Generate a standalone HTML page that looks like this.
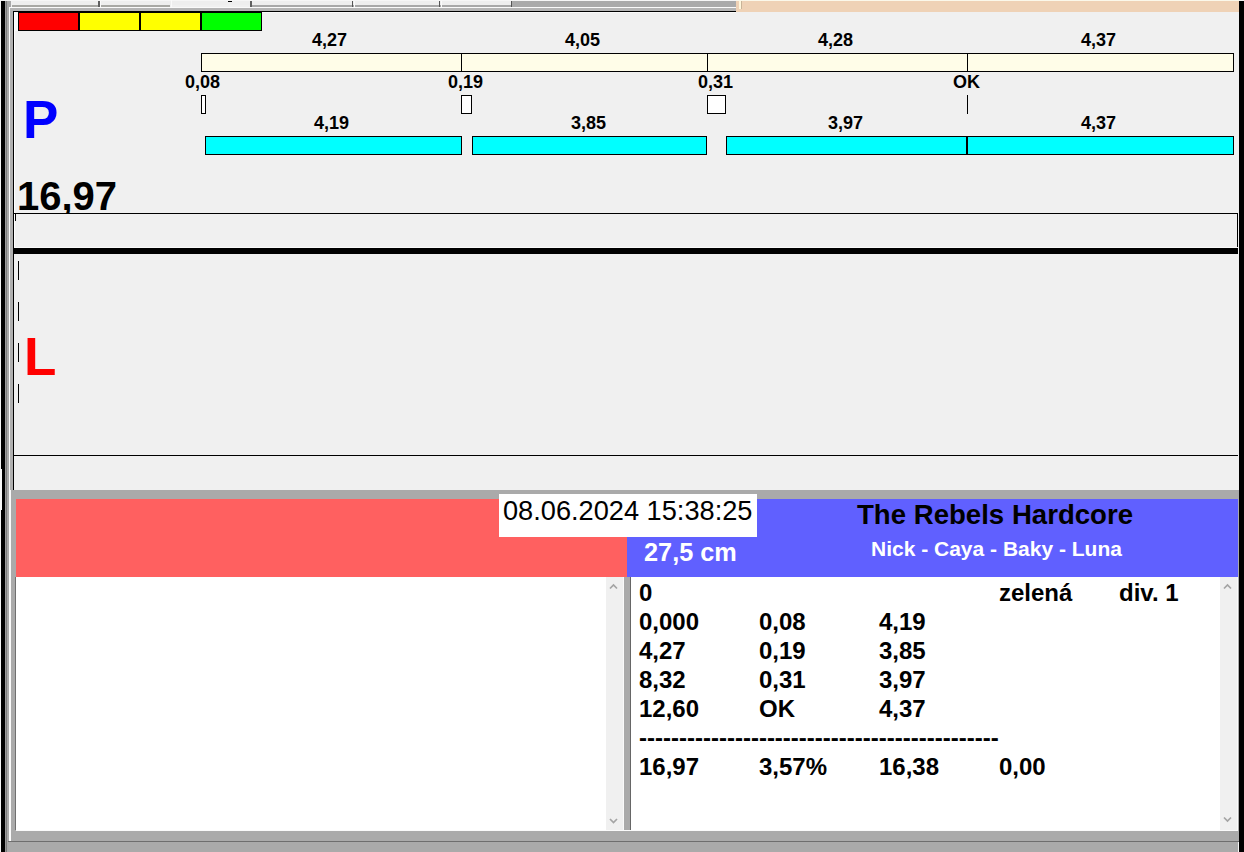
<!DOCTYPE html>
<html><head><meta charset="utf-8">
<style>
*{margin:0;padding:0;box-sizing:border-box}
html,body{width:1244px;height:852px;overflow:hidden;background:#f0f0f0;font-family:"Liberation Sans",sans-serif}
.a{position:absolute}
.t{position:absolute;white-space:pre;font-weight:bold;line-height:1;color:#000}
.bx{position:absolute;border:1px solid #000}
</style></head><body>
<!-- outer left frame -->
<div class="a" style="left:0;top:0;width:1px;height:852px;background:#f4f4f4"></div>
<div class="a" style="left:1px;top:1px;width:4px;height:851px;background:#000"></div>
<div class="a" style="left:5px;top:1px;width:1px;height:851px;background:#9a9a9a"></div>
<div class="a" style="left:6px;top:1px;width:1px;height:851px;background:#7c7c7c"></div>
<div class="a" style="left:7px;top:1px;width:2px;height:851px;background:#a8a8a8"></div>
<div class="a" style="left:9px;top:1px;width:2px;height:6px;background:#a8a8a8"></div>
<div class="a" style="left:9px;top:7px;width:1px;height:834px;background:#fafafa"></div>
<div class="a" style="left:10px;top:8px;width:3px;height:482px;background:#b0b0b0"></div>
<div class="a" style="left:9px;top:841px;width:2px;height:11px;background:#aaaaaa"></div>
<!-- top tab strip -->
<div class="a" style="left:10px;top:0;width:726px;height:1px;background:#f6f6f6"></div>
<div class="a" style="left:12px;top:1px;width:724px;height:4px;background:#eeeeee"></div>
<div class="a" style="left:12px;top:5px;width:158px;height:2px;background:#a8a8a4"></div>
<div class="a" style="left:252px;top:5px;width:260px;height:2px;background:#a8a8a8"></div>
<div class="a" style="left:512px;top:1px;width:224px;height:6px;background:#aaaaaa"></div>
<div class="a" style="left:98px;top:1px;width:2px;height:6px;background:#606060"></div>
<div class="a" style="left:100px;top:1px;width:1px;height:6px;background:#fafafa"></div>
<div class="a" style="left:171px;top:0px;width:1px;height:7px;background:#fafafa"></div>
<div class="a" style="left:228px;top:1px;width:4px;height:1px;background:#000"></div>
<div class="a" style="left:250px;top:1px;width:2px;height:6px;background:#606060"></div>
<div class="a" style="left:352px;top:1px;width:1px;height:6px;background:#555"></div>
<div class="a" style="left:354px;top:1px;width:1px;height:6px;background:#fafafa"></div>
<div class="a" style="left:439px;top:1px;width:1px;height:6px;background:#555"></div>
<div class="a" style="left:441px;top:1px;width:1px;height:6px;background:#fafafa"></div>
<div class="a" style="left:511px;top:1px;width:1px;height:6px;background:#555"></div>
<div class="a" style="left:10px;top:7px;width:726px;height:1px;background:#fafafa"></div>
<div class="a" style="left:10px;top:8px;width:726px;height:3px;background:#b4b4b4"></div>
<div class="a" style="left:13px;top:11px;width:723px;height:1px;background:#000"></div>
<div class="a" style="left:14px;top:12px;width:722px;height:1px;background:#fafafa"></div>
<!-- peach -->
<div class="a" style="left:736px;top:1px;width:503px;height:11px;background:#efd2b6"></div>
<div class="a" style="left:739px;top:0;width:2px;height:9px;background:#fff6dc"></div>
<div class="a" style="left:741px;top:1px;width:1px;height:8px;background:#c8b498"></div>
<div class="a" style="left:736px;top:0;width:503px;height:1px;background:#fbf8ea"></div>
<!-- right black -->
<div class="a" style="left:1239px;top:1px;width:5px;height:851px;background:#000"></div>

<!-- P panel left border -->
<div class="a" style="left:13px;top:11px;width:1px;height:479px;background:#000"></div>
<div class="a" style="left:14px;top:12px;width:1px;height:236px;background:#fff"></div>
<div class="a" style="left:15px;top:12px;width:3px;height:19px;background:#fafafa"></div>

<!-- color bar -->
<div class="bx" style="left:18px;top:12px;width:61px;height:19px;background:#ff0000"></div>
<div class="bx" style="left:79px;top:12px;width:61px;height:19px;background:#ffff00"></div>
<div class="bx" style="left:140px;top:12px;width:61px;height:19px;background:#ffff00"></div>
<div class="bx" style="left:201px;top:12px;width:61px;height:19px;background:#00ff00"></div>

<!-- cream bar -->
<div class="bx" style="left:201px;top:53px;width:1033px;height:19px;background:#fffde8"></div>
<div class="a" style="left:461px;top:53px;width:1px;height:19px;background:#000"></div>
<div class="a" style="left:707px;top:53px;width:1px;height:19px;background:#000"></div>
<div class="a" style="left:967px;top:53px;width:1px;height:19px;background:#000"></div>

<!-- small boxes -->
<div class="bx" style="left:201px;top:95px;width:5px;height:19px;background:#fff"></div>
<div class="bx" style="left:461px;top:95px;width:11px;height:19px;background:#fff"></div>
<div class="bx" style="left:707px;top:95px;width:19px;height:19px;background:#fff"></div>
<div class="a" style="left:967px;top:95px;width:1px;height:19px;background:#000"></div>

<!-- cyan bars -->
<div class="bx" style="left:205px;top:136px;width:257px;height:19px;background:#00ffff"></div>
<div class="bx" style="left:472px;top:136px;width:235px;height:19px;background:#00ffff"></div>
<div class="bx" style="left:726px;top:136px;width:241px;height:19px;background:#00ffff"></div>
<div class="bx" style="left:967px;top:136px;width:267px;height:19px;background:#00ffff"></div>

<!-- labels -->
<div id="lbl">
<span class="t s18" style="left:312px;top:31px">4,27</span>
<span class="t s18" style="left:565px;top:31px">4,05</span>
<span class="t s18" style="left:818px;top:31px">4,28</span>
<span class="t s18" style="left:1081px;top:31px">4,37</span>
<span class="t s18" style="left:185px;top:73px">0,08</span>
<span class="t s18" style="left:448px;top:73px">0,19</span>
<span class="t s18" style="left:698px;top:73px">0,31</span>
<span class="t s18" style="left:953px;top:73px">OK</span>
<span class="t s18" style="left:314px;top:114px">4,19</span>
<span class="t s18" style="left:571px;top:114px">3,85</span>
<span class="t s18" style="left:828px;top:114px">3,97</span>
<span class="t s18" style="left:1081px;top:114px">4,37</span>
</div>
<style>.s18{font-size:18px}</style>

<span class="t" style="left:23px;top:93px;font-size:53px;color:#0000ff">P</span>
<div class="a" style="left:15px;top:170px;width:120px;height:43px;overflow:hidden"><span class="t" style="left:2px;top:6px;font-size:40px">16,97</span></div>

<!-- box under 16,97 -->
<div class="a" style="left:13px;top:213px;width:1225px;height:1px;background:#000"></div>
<div class="a" style="left:1237px;top:213px;width:1px;height:34px;background:#000"></div>
<div class="a" style="left:14px;top:247px;width:1224px;height:1px;background:#fafafa"></div>
<div class="a" style="left:15px;top:213px;width:1px;height:8px;background:#000"></div>
<div class="a" style="left:13px;top:248px;width:1225px;height:6px;background:#000"></div>

<!-- L section -->
<div class="a" style="left:18px;top:261px;width:1px;height:19px;background:#000"></div>
<div class="a" style="left:18px;top:302px;width:1px;height:19px;background:#000"></div>
<div class="a" style="left:18px;top:343px;width:1px;height:19px;background:#000"></div>
<div class="a" style="left:18px;top:384px;width:1px;height:19px;background:#000"></div>
<span class="t" style="left:24px;top:330px;font-size:53px;color:#ff0000">L</span>
<div class="a" style="left:13px;top:455px;width:1225px;height:1px;background:#000"></div>

<!-- bottom section -->
<div class="a" style="left:10px;top:490px;width:1229px;height:362px;background:#aaaaaa"></div>
<div class="a" style="left:10px;top:490px;width:1px;height:351px;background:#fafafa"></div>
<div class="a" style="left:16px;top:499px;width:611px;height:78px;background:#ff6060"></div>
<div class="a" style="left:627px;top:499px;width:611px;height:78px;background:#6060ff"></div>

<div class="a" style="left:499px;top:494px;width:258px;height:43px;background:#fff"></div>
<span class="t" style="left:503px;top:497px;font-size:27.2px;font-weight:normal">08.06.2024 15:38:25</span>
<span class="t" style="left:644px;top:540px;font-size:25.3px;color:#fff">27,5 cm</span>
<span class="t" style="left:857px;top:501px;font-size:27.6px">The Rebels Hardcore</span>
<span class="t" style="left:871px;top:538px;font-size:21px;color:#fff">Nick - Caya - Baky - Luna</span>

<!-- left white panel -->
<div class="a" style="left:15px;top:577px;width:1px;height:253px;background:#707070"></div>
<div class="a" style="left:16px;top:577px;width:608px;height:253px;background:#fff"></div>
<div class="a" style="left:606px;top:577px;width:17px;height:253px;background:#f0f0f0"></div>
<div class="a" style="left:630px;top:577px;width:1px;height:253px;background:#666"></div>
<div class="a" style="left:631px;top:577px;width:607px;height:253px;background:#fff"></div>
<div class="a" style="left:1220px;top:577px;width:17px;height:253px;background:#f0f0f0"></div>
<div class="a" style="left:16px;top:830px;width:1222px;height:1px;background:#fafafa"></div>
<div class="a" style="left:623px;top:577px;width:1px;height:253px;background:#fafafa"></div>
<div class="a" style="left:1237px;top:577px;width:1px;height:253px;background:#fafafa"></div>
<div class="a" style="left:1238px;top:842px;width:1px;height:10px;background:#f4f4f4"></div>
<div class="a" style="left:8px;top:841px;width:1231px;height:1px;background:#6e6e6e"></div>
<svg class="a" style="left:0;top:0" width="1244" height="852">
<g fill="none" stroke="#a4a4a4" stroke-width="1.7">
<polyline points="610,588.5 613.5,585 617,588.5"/>
<polyline points="610,819 613.5,822.5 617,819"/>
<polyline points="1224,588.5 1227.5,585 1231,588.5"/>
<polyline points="1224,817.5 1227.5,821 1231,817.5"/>
</g></svg>
<div class="a" style="left:0;top:469px;width:2px;height:41px;background:#f8f8f8"></div>
<!-- right panel text -->
<div id="rt" style="position:absolute;left:639px;top:581px;font-size:24px;font-weight:bold;line-height:29px">
<span class="t" style="left:0;top:0">0</span><span class="t" style="left:360px;top:0">zelená</span><span class="t" style="left:480px;top:0">div. 1</span>
<span class="t" style="left:0;top:29px">0,000</span><span class="t" style="left:120px;top:29px">0,08</span><span class="t" style="left:240px;top:29px">4,19</span>
<span class="t" style="left:0;top:58px">4,27</span><span class="t" style="left:120px;top:58px">0,19</span><span class="t" style="left:240px;top:58px">3,85</span>
<span class="t" style="left:0;top:87px">8,32</span><span class="t" style="left:120px;top:87px">0,31</span><span class="t" style="left:240px;top:87px">3,97</span>
<span class="t" style="left:0;top:116px">12,60</span><span class="t" style="left:120px;top:116px">OK</span><span class="t" style="left:240px;top:116px">4,37</span>
<span class="t" style="left:0;top:145px">---------------------------------------------</span>
<span class="t" style="left:0;top:174px">16,97</span><span class="t" style="left:120px;top:174px">3,57%</span><span class="t" style="left:240px;top:174px">16,38</span><span class="t" style="left:360px;top:174px">0,00</span>
</div>
</body></html>
